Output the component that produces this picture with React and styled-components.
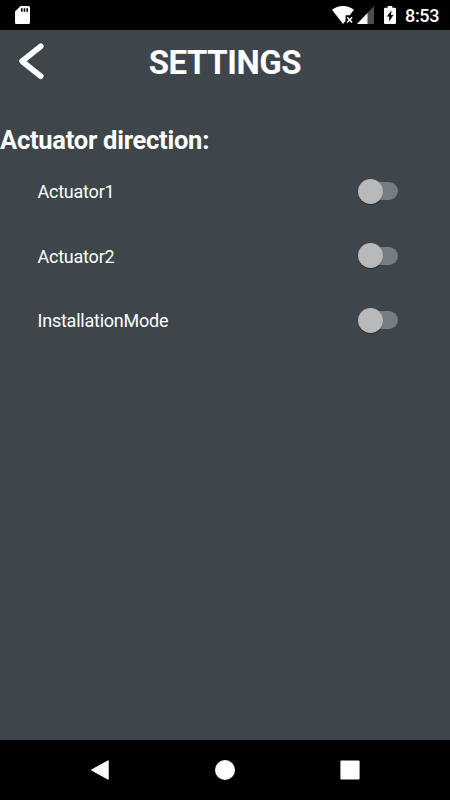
import React, { Component } from "react";
import styled, { createGlobalStyle } from "styled-components";

const GlobalStyle = createGlobalStyle`
  body {
    margin: 0;
    background: #3e454b;
    font-family: Roboto, "Liberation Sans", sans-serif;
  }
`;
const Screen = styled.div`
  display: flex;
  flex-direction: column;
  height: 800px;
  width: 450px;
  overflow: hidden;
  background: #3e454b;
  color: #fff;
`;
const StatusBar = styled.div`
  display: flex;
  align-items: center;
  justify-content: space-between;
  box-sizing: border-box;
  height: 30px;
  padding: 0 10px 0 15px;
  background: #000;
`;
const StatusIcons = styled.div`
  display: flex;
  align-items: center;
`;
const StatusIcon = styled.svg`
  display: block;
  margin-right: ${({ $gap }) => $gap || 0}px;
`;
const Clock = styled.span`
  width: 35px;
  font-size: 18px;
  font-weight: 500;
  letter-spacing: -0.35px;
  line-height: 30px;
  padding-top: 2px;
  white-space: nowrap;
`;
const Header = styled.header`
  display: grid;
  grid-template-columns: 60px 1fr 60px;
  align-items: center;
  height: 64px;
`;
const BackButton = styled.button`
  padding: 0 0 2px 17px;
  border: 0;
  background: none;
  line-height: 0;
  text-align: left;
`;
const Title = styled.h1`
  margin: 0;
  padding-top: 2px;
  font-size: 33px;
  font-weight: 700;
  letter-spacing: -0.45px;
  line-height: 62px;
  text-align: center;
`;
const Content = styled.main`
  flex: 1;
  padding-top: 30px;
`;
const SectionTitle = styled.h2`
  margin: 0;
  font-size: 25.5px;
  font-weight: 700;
  letter-spacing: -0.25px;
  line-height: 32px;
`;
const SettingRow = styled.div`
  display: flex;
  align-items: center;
  justify-content: space-between;
  height: 64.6px;
  padding: 0 52px 0 37.5px;
`;
const SettingList = styled.div`
  padding-top: 3px;
`;
const Label = styled.span`
  font-size: 18px;
  letter-spacing: -0.23px;
  line-height: 24px;
  padding-top: 2px;
`;
const Track = styled.button`
  display: flex;
  align-items: center;
  width: 38px;
  height: 18px;
  padding: 0;
  border: 0;
  border-radius: 9px;
  background: #777d81;
`;
const Thumb = styled.span`
  flex: none;
  width: 25px;
  height: 25px;
  margin-left: ${({ $on }) => ($on ? 15 : -2)}px;
  border-radius: 50%;
  background: #b9b9b9;
  box-shadow: 0 1px 1px rgba(0, 0, 0, 0.35);
`;
const NavBar = styled.nav`
  display: flex;
  align-items: center;
  justify-content: space-between;
  box-sizing: border-box;
  height: 60px;
  padding: 0 90px;
  background: #000;
`;

const SETTINGS = ["Actuator1", "Actuator2", "InstallationMode"];

class App extends Component {
  state = { enabled: {} };
  toggle = name => {
    const { enabled } = this.state;
    this.setState({ enabled: { ...enabled, [name]: !enabled[name] } });
  };
  renderSetting = name => (
    <SettingRow key={name}>
      <Label>{name}</Label>
      <Track onClick={() => this.toggle(name)} aria-label={name}>
        <Thumb $on={this.state.enabled[name]} />
      </Track>
    </SettingRow>
  );
  render() {
    return (
      <Screen>
        <GlobalStyle />
        <StatusBar>
          <StatusIcon width="15" height="18" viewBox="0 0 15 18">
            <path
              d="M5.6 0H13.4Q15 0 15 1.6V16.4Q15 18 13.4 18H1.6Q0 18 0 16.4V5.6Z"
              fill="#fff"
            />
            <path d="M6 2.2h1.6v3.6H6zM8.7 2.2h1.6v3.6H8.7zM11.4 2.2H13v3.6h-1.6z" />
          </StatusIcon>
          <StatusIcons>
            <StatusIcon $gap={3} width="22" height="18" viewBox="0 0 22 18">
              <path
                d="M0 3.7C3 1.4 6.8 0 11 0s8 1.4 11 3.7L17.8 9.2H13.6V14.8L11 18Z"
                fill="#fff"
              />
              <path
                d="M15.2 11.3l4.9 5.2M20.1 11.3l-4.9 5.2"
                stroke="#fff"
                strokeWidth="1.5"
              />
            </StatusIcon>
            <StatusIcon $gap={10} width="17" height="18" viewBox="0 0 17 18">
              <path d="M17 0V18H0Z" fill="#4d4d4d" />
              <path d="M10.5 6.9V18H0Z" fill="#fff" />
            </StatusIcon>
            <StatusIcon $gap={9} width="12" height="18" viewBox="0 0 12 18">
              <path
                d="M3.7 0h4.6v1.8H11q1 0 1 1V17q0 1-1 1H1q-1 0-1-1V2.8q0-1 1-1h2.7z"
                fill="#fff"
              />
              <path d="M7.6 4.2L2.8 10.6H5.2V15.4L9.4 8.9H7Z" />
            </StatusIcon>
            <Clock>8:53</Clock>
          </StatusIcons>
        </StatusBar>
        <Header>
          <BackButton aria-label="Back">
            <svg width="30" height="40" viewBox="0 0 30 40">
              <path
                d="M23.8 5.2L5 20.2L23.8 35.2"
                fill="none"
                stroke="#fff"
                strokeWidth="5.6"
                strokeLinecap="round"
                strokeLinejoin="round"
              />
            </svg>
          </BackButton>
          <Title>SETTINGS</Title>
        </Header>
        <Content>
          <SectionTitle>Actuator direction:</SectionTitle>
          <SettingList>{SETTINGS.map(this.renderSetting)}</SettingList>
        </Content>
        <NavBar>
          <svg width="20" height="20" viewBox="0 0 20 20">
            <path
              d="M18.2 .7V19.3L1.5 10Z"
              fill="#fff"
              stroke="#fff"
              strokeLinejoin="round"
            />
          </svg>
          <svg width="20" height="20" viewBox="0 0 20 20">
            <circle cx="10" cy="10" r="10" fill="#fff" />
          </svg>
          <svg width="20" height="20" viewBox="0 0 20 20">
            <rect x=".4" y=".4" width="19.2" height="19.2" rx="1" fill="#fff" />
          </svg>
        </NavBar>
      </Screen>
    );
  }
}

export default App;
